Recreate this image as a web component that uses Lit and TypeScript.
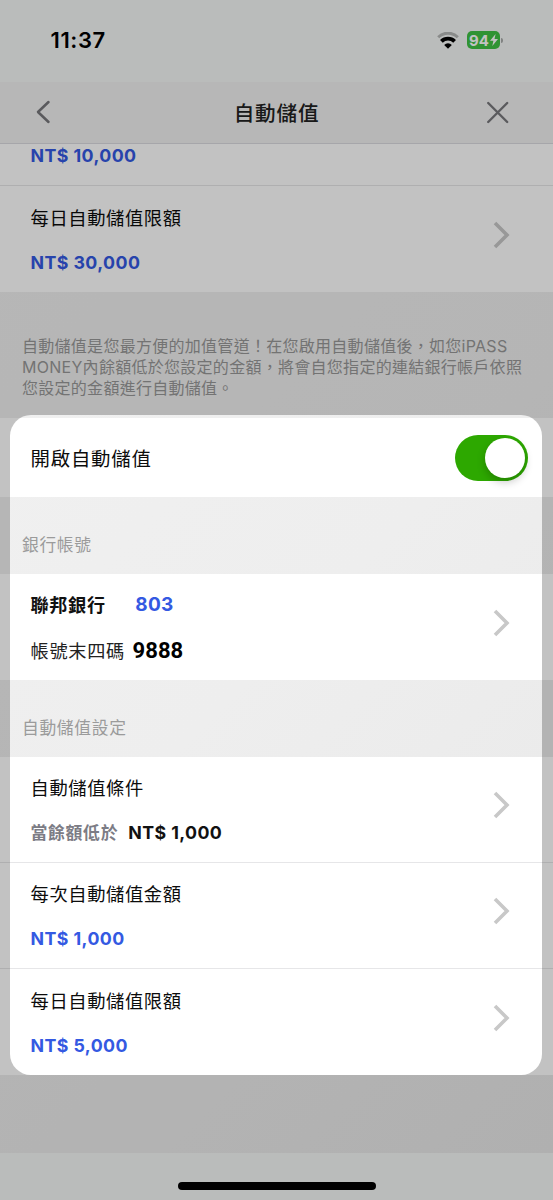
import { LitElement, html, css, svg, nothing } from "lit";
import { customElement, property, state } from "lit/decorators.js";

@customElement("setting-row")
class SettingRow extends LitElement {
  @property() label = "";
  @property() amount = "";
  @property() hint = "";

  static styles = css`
    :host {
      display: flex;
      align-items: center;
      justify-content: space-between;
      box-sizing: border-box;
      padding: 0 43px 0 30.5px;
      background: #fff;
    }
    .lines {
      display: flex;
      flex-direction: column;
      gap: 19px;
      padding-top: 2px;
    }
    .label {
      font-size: 18.3px;
      line-height: 26px;
      letter-spacing: 0.6px;
      color: #0c0c0c;
    }
    .value {
      display: flex;
      align-items: center;
      gap: 10px;
      height: 26px;
      line-height: 26px;
    }
    .hint {
      font-size: 16.8px;
      font-weight: 700;
      letter-spacing: 0.75px;
      color: #7c7c85;
    }
    .amount {
      font-size: 17.8px;
      font-weight: 650;
      letter-spacing: 0.42px;
      color: #3459e2;
    }
    .amount.dark {
      color: #111;
    }
    .chevron {
      display: block;
      flex: none;
      padding-bottom: 8.5px;
    }
  `;

  render() {
    return html`
      <div class="lines">
        <slot>
          <div class="label">${this.label}</div>
          <div class="value">
            ${this.hint ? html`<span class="hint">${this.hint}</span>` : nothing}
            <span class="amount ${this.hint ? "dark" : ""}">${this.amount}</span>
          </div>
        </slot>
      </div>
      <svg class="chevron" width="17" height="28" viewBox="0 0 17 28">
        <path d="M2 2 L14 14 L2 26" fill="none" stroke="#c8c8c8" stroke-width="3.6" />
      </svg>
    `;
  }
}

@customElement("app-root")
class AppRoot extends LitElement {
  @state() enabled = true;

  static styles = css`
    :host {
      display: block;
      font-family: Inter, "Noto Sans CJK TC", sans-serif;
    }
    .screen {
      position: relative;
      width: 553px;
      height: 1200px;
      overflow: hidden;
      display: flex;
      flex-direction: column;
      background: #f5f7f6;
    }
    .status {
      flex: none;
      height: 82px;
      box-sizing: border-box;
      padding: 0 50px 2px 50.5px;
      display: flex;
      align-items: center;
      justify-content: space-between;
    }
    .time {
      font-size: 22px;
      font-weight: 600;
      color: #000;
      letter-spacing: 0.6px;
    }
    .indicators {
      display: flex;
      align-items: center;
      gap: 8.5px;
    }
    .indicators svg {
      display: block;
    }
    .level {
      display: flex;
      align-items: center;
    }
    .cell {
      display: flex;
      align-items: center;
      justify-content: center;
      gap: 1px;
      width: 33px;
      height: 18px;
      border-radius: 5px;
      background: #40c143;
      color: #fff;
      font-size: 15px;
      font-weight: 700;
    }
    .cap {
      width: 2px;
      height: 5px;
      margin-left: 1px;
      border-radius: 0 2px 2px 0;
      background: #a9abaa;
    }
    .nav {
      flex: none;
      height: 61.5px;
      box-sizing: border-box;
      border-bottom: 1px solid #dadae0;
      padding: 0 43px 0 35px;
      display: grid;
      grid-template-columns: 24px 1fr 16px;
      align-items: center;
      background: #f1f1f1;
    }
    .nav svg {
      display: block;
    }
    .nav svg:last-child {
      justify-self: end;
    }
    .title {
      text-align: center;
      font-size: 20.6px;
      font-weight: 500;
      letter-spacing: 0.8px;
      color: #222;
    }
    .list {
      flex: none;
      height: 1009.5px;
      display: flex;
      flex-direction: column;
      background: linear-gradient(135deg, #f1f1f1 0%, #eeeeee 50%, #e8e8e8 100%);
    }
    .partial {
      height: 41.5px;
      box-sizing: border-box;
      padding: 0 0 0 30.5px;
      background: #fff;
      line-height: 24px;
      font-size: 17.8px;
      font-weight: 650;
      letter-spacing: 0.42px;
      color: #3459e2;
    }
    .row {
      height: 106px;
    }
    .ruled {
      border-top: 1px solid #e6e6e8;
    }
    .short {
      height: 105px;
    }
    .tall {
      height: 107px;
    }
    .note {
      height: 125.5px;
      box-sizing: border-box;
      padding: 43.5px 20px 0 22px;
      font-size: 16px;
      line-height: 21.2px;
      letter-spacing: 0.28px;
      color: #989898;
      white-space: nowrap;
    }
    .switch-row {
      height: 79.5px;
      box-sizing: border-box;
      padding: 1px 25px 0 30.5px;
      display: flex;
      align-items: center;
      justify-content: space-between;
      background: #fff;
      font-size: 19.4px;
      letter-spacing: 0.8px;
      color: #0c0c0c;
    }
    .switch {
      display: flex;
      align-items: center;
      width: 73px;
      height: 46px;
      box-sizing: border-box;
      padding: 3px;
      border: 0;
      border-radius: 23px;
      background: #c8c8c8;
    }
    .switch.on {
      justify-content: flex-end;
      background: #2da800;
    }
    .knob {
      width: 40px;
      height: 40px;
      border-radius: 50%;
      background: #fff;
      box-shadow: 0 4px 9px rgba(0, 0, 0, 0.22);
    }
    .section {
      height: 77px;
      box-sizing: border-box;
      padding: 35px 0 0 22px;
      font-size: 16.8px;
      line-height: 26px;
      letter-spacing: 0.65px;
      color: #9b9b9b;
    }
    .bank {
      display: flex;
      gap: 29.5px;
      line-height: 26px;
      font-size: 18.1px;
      font-weight: 700;
      letter-spacing: 0.7px;
      color: #111;
    }
    .code {
      font-size: 19px;
      font-weight: 650;
      letter-spacing: 0.35px;
      color: #3459e2;
    }
    .account {
      display: flex;
      gap: 7.5px;
      padding-top: 1px;
      line-height: 26px;
      font-size: 18.2px;
      letter-spacing: 0.7px;
      color: #222;
    }
    .digits {
      font-family: Roboto, "Liberation Sans", sans-serif;
      font-size: 22px;
      font-weight: 700;
      letter-spacing: 0.1px;
      color: #000;
    }
    .home {
      flex: 1;
      display: flex;
      align-items: flex-end;
      justify-content: center;
      padding-bottom: 10.5px;
    }
    .bar {
      width: 198px;
      height: 7.5px;
      border-radius: 4px;
      background: #000;
    }
    .spotlight {
      position: absolute;
      left: 10.3px;
      top: 415px;
      width: 532.2px;
      height: 659.5px;
      border-radius: 21px;
      box-shadow: 0 0 0 1200px rgba(0, 0, 0, 0.24);
      pointer-events: none;
    }
  `;

  private wifi() {
    return svg`
      <path d="M1.2 5.2 A14 14 0 0 1 20.8 5.2" fill="none" stroke="#b5b7b6" stroke-width="3" />
      <path d="M4.4 9.3 A9.4 9.4 0 0 1 17.6 9.3" fill="none" stroke="#000" stroke-width="3.9" />
      <path d="M7.2 12.9 A5.2 5.2 0 0 1 14.8 12.9 L11 16.8 Z" fill="#000" />`;
  }

  render() {
    return html`
      <main class="screen">
        <div class="status">
          <span class="time">11:37</span>
          <div class="indicators">
            <svg width="22" height="17" viewBox="0 0 22 17">${this.wifi()}</svg>
            <div class="level">
              <div class="cell">
                <span>94</span>
                <svg width="8" height="12" viewBox="0 0 8 12">
                  <path d="M5.6 0 L0 6.8 H3.4 L2.3 12 L8 5 H4.5 Z" fill="#fff" />
                </svg>
              </div>
              <div class="cap"></div>
            </div>
          </div>
        </div>

        <header class="nav">
          <svg width="16" height="24" viewBox="0 0 16 24">
            <path d="M13.5 2 L3 12 L13.5 22" fill="none" stroke="#77777b" stroke-width="2.5" stroke-linecap="round" stroke-linejoin="round" />
          </svg>
          <span class="title">自動儲值</span>
          <svg width="24" height="24" viewBox="0 0 24 24">
            <path d="M2.2 3 L21.2 22 M21.2 3 L2.2 22" fill="none" stroke="#77777b" stroke-width="2.4" stroke-linecap="round" />
          </svg>
        </header>

        <section class="list">
          <div class="partial">NT$ 10,000</div>
          <setting-row class="row tall ruled" label="每日自動儲值限額" amount="NT$ 30,000"></setting-row>
          <div class="note">
            自動儲值是您最方便的加值管道！在您啟用自動儲值後，如您iPASS<br />MONEY內餘額低於您設定的金額，將會自您指定的連結銀行帳戶依照<br />您設定的金額進行自動儲值。
          </div>
          <div class="switch-row">
            <span>開啟自動儲值</span>
            <button
              class="switch ${this.enabled ? "on" : ""}"
              @click=${() => (this.enabled = !this.enabled)}
            >
              <span class="knob"></span>
            </button>
          </div>
          <div class="section">銀行帳號</div>
          <setting-row class="row">
            <div class="bank"><span>聯邦銀行</span><span class="code">803</span></div>
            <div class="account"><span>帳號末四碼</span><span class="digits">9888</span></div>
          </setting-row>
          <div class="section">自動儲值設定</div>
          <setting-row class="row short" label="自動儲值條件" hint="當餘額低於" amount="NT$ 1,000"></setting-row>
          <setting-row class="row ruled" label="每次自動儲值金額" amount="NT$ 1,000"></setting-row>
          <setting-row class="row tall ruled" label="每日自動儲值限額" amount="NT$ 5,000"></setting-row>
        </section>

        <div class="home"><div class="bar"></div></div>
        <div class="spotlight"></div>
      </main>
    `;
  }
}
